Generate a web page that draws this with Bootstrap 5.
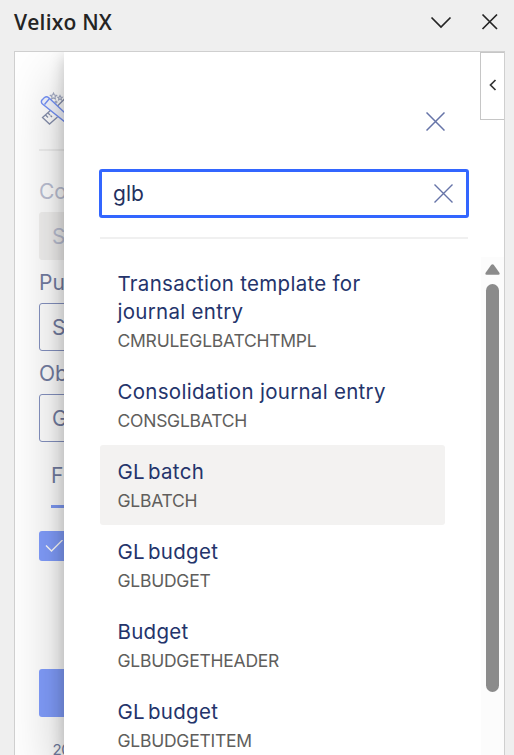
<!DOCTYPE html>
<html lang="en">
<head>
<meta charset="utf-8">
<meta name="viewport" content="width=device-width, initial-scale=1">
<title>Velixo NX</title>
<link href="https://cdn.jsdelivr.net/npm/bootstrap@5.3.0/dist/css/bootstrap.min.css" rel="stylesheet">
<style>
body{background:#efefef;font-family:Inter,"Liberation Sans",sans-serif;height:755px;overflow:hidden}
svg{display:block;fill:none;flex:none}
.titlebar{height:51px;padding:0 16px 7px 14px;color:#242424}
.titlebar h1{font:600 21px/30px "Open Sans","Noto Sans",sans-serif;letter-spacing:.2px}
.pane{margin:0 9px 0 14px;height:704px;border:1px solid #cfcfcf;border-bottom:0;background:#fff}
.under{padding:38px 24px 0;width:300px;color:#737da2;font-size:21px;line-height:28px}
.rule{height:2px;background:#f0f0f0}
.under-rule{margin:23px 0 27px}
.caption{margin-top:9px}
.field{height:48px;border:1px solid #8592c0;border-radius:3px;padding:10px 12px;margin-top:6px}
.field-off{background:#f2f1f0;border-color:#f2f1f0}
.dim{color:#bcc1d4}
.tab-name{margin:20px 0 0 12px}
.tab-mark{height:3px;background:#7f9bf6;margin:15px 0 23px 12px}
.check{height:30px;width:48px;border-radius:3px;background:#829efd;padding:9px 6px}
.action{height:48px;border-radius:3px;background:#829efd;margin-top:108px}
.foot-note{font-size:15px;margin:20px 0 0 13.5px;line-height:26px;letter-spacing:-.5px}
.sheet{left:49px;top:0;right:0;bottom:0;background:#fff;box-shadow:0 25.6px 57.6px rgba(0,0,0,.26),0 4.8px 14.4px rgba(0,0,0,.2)}
.sheet>*{flex-shrink:0}
.sheet-head{height:117px;padding:59.5px 59.5px 0 0}
.search{height:49px;margin:0 35px;border:3px solid #3366ff;border-radius:3px;padding:0 13.5px 0 11px;color:#24315f;font-size:21px}
.sheet-rule{margin:19px 36px 18px}
.results{width:345px;margin-left:36px}
.result{padding:13px 17.5px 9px;border-radius:3px}
.result.active{background:#f3f2f1}
.name{font-size:20.5px;line-height:28px;color:#24346b;letter-spacing:.29px;white-space:nowrap}
.name.tight{word-spacing:-3px}
.code{font-size:17.5px;line-height:30px;color:#605e5c;letter-spacing:-.24px;white-space:nowrap}
.track{width:23px;margin-left:auto;background:#fcfcfc;padding:7px 5px 0 4px}
.thumb{width:13px;height:408px;border-radius:7px;background:#8b8b8b;margin:9px 0 0 1px}
.collapse-tab{right:0;top:0;width:24px;height:68px;border:1px solid #c6c6c6;border-right:0;background:#fff;padding-bottom:2px}
</style>
<script src="https://cdn.jsdelivr.net/npm/bootstrap@5.3.0/dist/js/bootstrap.bundle.min.js"></script>
</head>
<body>
<header class="titlebar d-flex align-items-center">
  <h1 class="m-0 me-auto">Velixo NX</h1>
  <svg width="22" height="14" viewBox="0 0 22 14" stroke="#242424" stroke-width="1.7"><path d="M1.500 2.500 11 12l9.500-9.500"/></svg>
  <svg class="ms-4" width="22" height="18" viewBox="0 0 22 18" stroke="#242424" stroke-width="1.7"><path d="m6.500 1.500 14.500 14.500M6.500 16 21 1.500"/></svg>
</header>
<main class="pane position-relative overflow-hidden">
  <section class="under">
    <svg width="34" height="36" viewBox="0 0 34 36" stroke="#a3abc4" stroke-width="1.1">
      <path d="m14.500 3 .9 2 2.200.3-1.600 1.500.4 2.200-1.900-1.100-1.900 1.100.4-2.200-1.600-1.500 2.200-.3zM21 5.500l.7 1.500 1.600.2-1.200 1.100.3 1.600-1.400-.8-1.400.8.3-1.600-1.200-1.100 1.600-.2z"/>
      <circle cx="17" cy="12" r="1"/>
      <path stroke="#8790ad" stroke-width="1.3" d="m18.500 16 7.500-7.500 6 6M12 20l-8.500 7.500 7 6.500 8-7M6.500 25l2.500 2.500M9 23l2 2M11.500 25.500l1.500 1.500"/>
      <path stroke="#7391f7" stroke-width="1.4" fill="#f5f7ff" d="m3 10 2.500-2.500q2-1.500 4 0L33 29.500l-4.500 4.500L3.500 14Q1.500 12 3 10z"/>
      <path stroke="#7391f7" stroke-width="1.4" d="m5.500 14.500 5-6"/>
    </svg>
    <div class="rule under-rule"></div>
    <div class="dim">Co</div>
    <div class="field field-off dim">S</div>
    <div class="caption">Pu</div>
    <div class="field">S</div>
    <div class="caption">Ob</div>
    <div class="field">G</div>
    <div class="tab-name">F</div>
    <div class="tab-mark"></div>
    <div class="check"><svg width="20" height="13" viewBox="0 0 20 13" stroke="#fff" stroke-width="1.4"><path d="m1 5.500 5.500 5.500L17.500 0"/></svg></div>
    <div class="action"></div>
    <div class="foot-note">20</div>
  </section>

  <aside class="sheet position-absolute d-flex flex-column">
    <div class="sheet-head d-flex justify-content-end align-items-start">
      <svg width="19" height="19" viewBox="0 0 19 19" stroke="#6674a8" stroke-width="1.5"><path d="m.5.5 18 18m0-18-18 18"/></svg>
    </div>
    <div class="search d-flex align-items-center justify-content-between">
      <span>glb</span>
      <svg width="19" height="19" viewBox="0 0 19 19" stroke="#6674a8" stroke-width="1.4"><path d="m.5.5 18 18m0-18-18 18"/></svg>
    </div>
    <div class="rule sheet-rule"></div>
    <div class="d-flex flex-grow-1">
      <div class="results">
        <div class="result"><div class="name">Transaction template for<br>journal entry</div><div class="code">CMRULEGLBATCHTMPL</div></div>
        <div class="result"><div class="name">Consolidation journal entry</div><div class="code">CONSGLBATCH</div></div>
        <div class="result active"><div class="name tight">GL batch</div><div class="code">GLBATCH</div></div>
        <div class="result"><div class="name tight">GL budget</div><div class="code">GLBUDGET</div></div>
        <div class="result"><div class="name">Budget</div><div class="code">GLBUDGETHEADER</div></div>
        <div class="result"><div class="name tight">GL budget</div><div class="code">GLBUDGETITEM</div></div>
      </div>
      <div class="track">
        <svg width="15" height="11" viewBox="0 0 15 11"><path fill="#8b8b8b" d="M6.300.8q1.200-1.200 2.400 0l5.700 8q.8 2-1 2H1.600q-1.800 0-1-2z"/></svg>
        <div class="thumb"></div>
      </div>
    </div>
  </aside>
  <div class="collapse-tab position-absolute d-flex align-items-center justify-content-center">
    <svg width="8" height="12" viewBox="0 0 8 12" stroke="#333" stroke-width="1.700"><path d="M6.500 1 1.500 6l5 5"/></svg>
  </div>
</main>
</body>
</html>
